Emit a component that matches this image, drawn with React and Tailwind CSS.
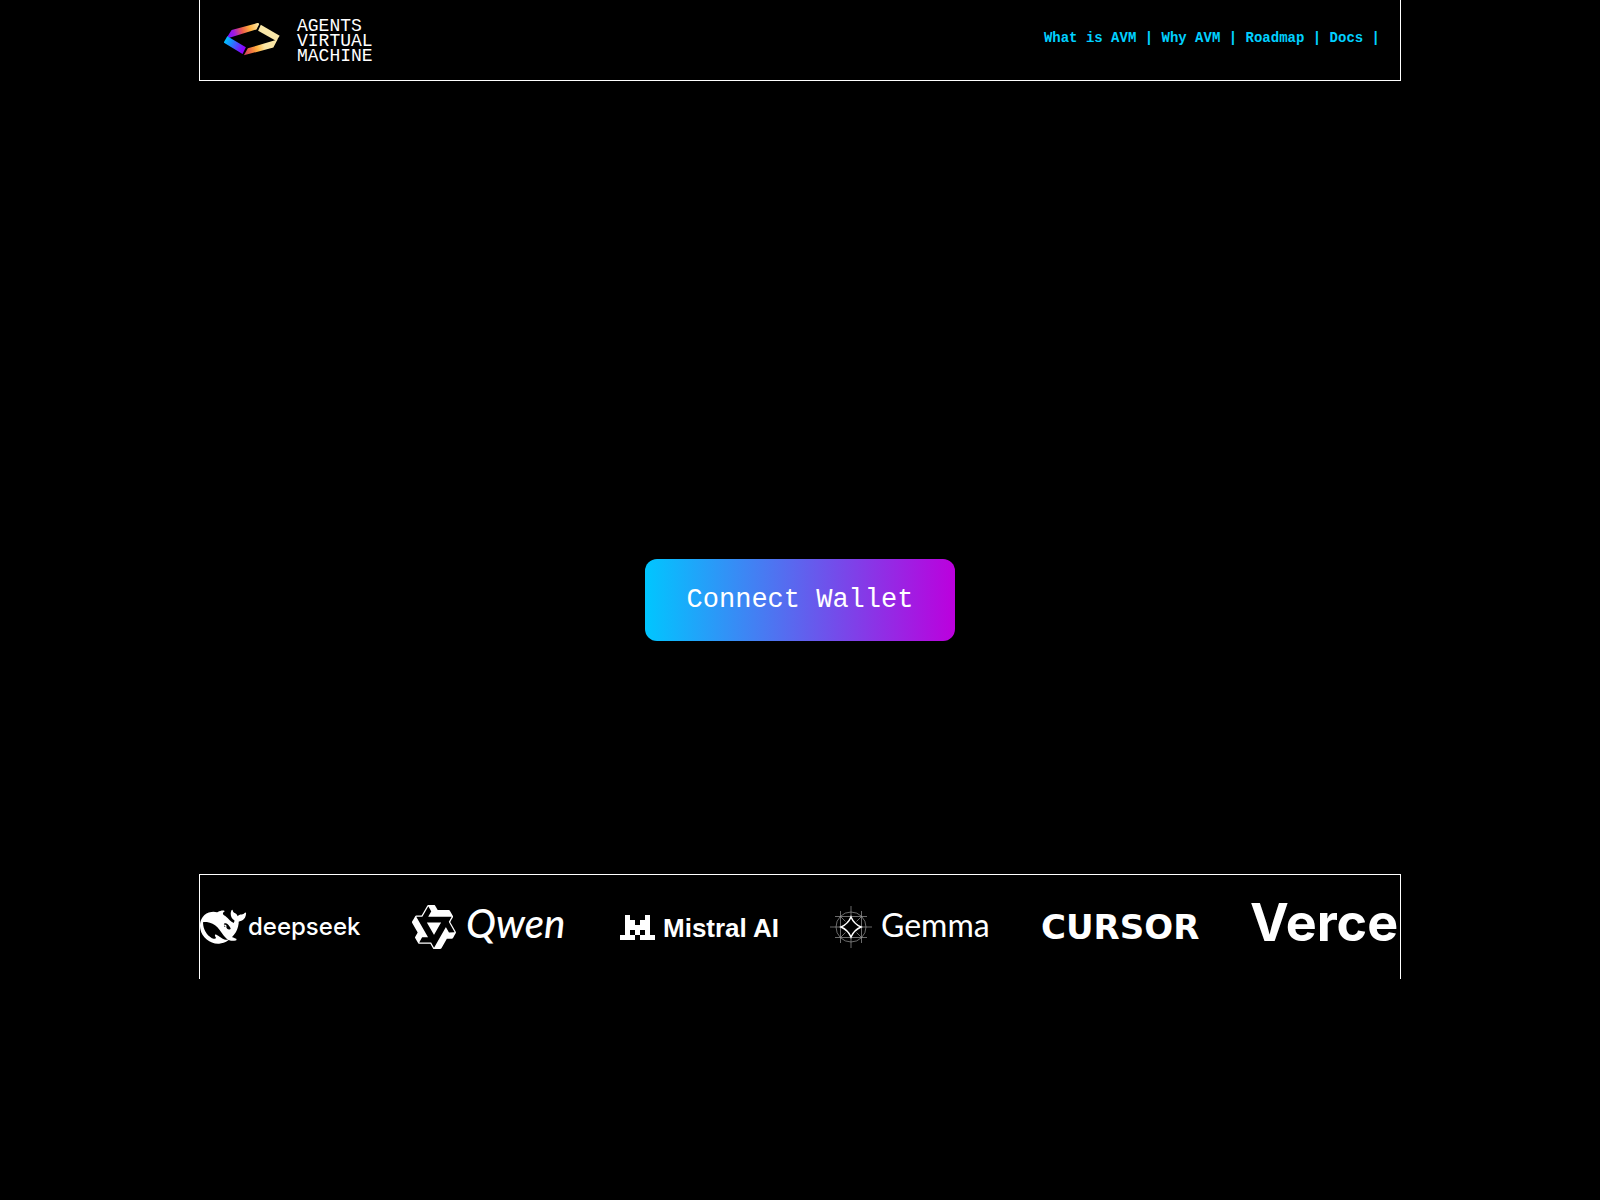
import React from "react";

const navLinks = ["What is AVM", "Why AVM", "Roadmap", "Docs"];

function AvmLogo() {
  return (
    <svg viewBox="102 68 172 108" className="h-9 w-[57px]" aria-hidden="true">
      <defs>
        <linearGradient id="avm-top" gradientUnits="userSpaceOnUse" x1="114" y1="108" x2="208" y2="78">
          <stop offset="0" stopColor="#7a10ff" />
          <stop offset="0.2" stopColor="#a01be0" />
          <stop offset="0.45" stopColor="#e9574f" />
          <stop offset="0.7" stopColor="#ffae3d" />
          <stop offset="1" stopColor="#fbe9a9" />
        </linearGradient>
        <linearGradient id="avm-left" gradientUnits="userSpaceOnUse" x1="104" y1="124" x2="164" y2="154">
          <stop offset="0" stopColor="#00c3ff" />
          <stop offset="0.3" stopColor="#1a8cff" />
          <stop offset="0.65" stopColor="#5a3cff" />
          <stop offset="0.9" stopColor="#8a00ff" />
        </linearGradient>
        <linearGradient id="avm-bottom" gradientUnits="userSpaceOnUse" x1="164" y1="160" x2="258" y2="132">
          <stop offset="0" stopColor="#d0405f" />
          <stop offset="0.22" stopColor="#f0763f" />
          <stop offset="0.42" stopColor="#ffb540" />
          <stop offset="0.65" stopColor="#fbe6a5" />
        </linearGradient>
      </defs>
      <path d="M125 92 202 71Q210 70 207 77L200 90 116 116 112 112Z" fill="url(#avm-top)" />
      <path d="M213 76 270 109 260 125 205 94Z" fill="#fae7a8" />
      <path d="M174 147 256 123 264 120 251 145 162 168Z" fill="url(#avm-bottom)" />
      <path d="M101 130 112 111 168 144 158 164Z" fill="url(#avm-left)" />
    </svg>
  );
}

function Logo({ label, children }) {
  return (
    <svg viewBox="0 0 160 44" className="h-11 w-40 shrink-0 overflow-visible fill-white" role="img" aria-label={label}>
      {children}
    </svg>
  );
}

function DeepSeek() {
  return (
    <Logo label="deepseek">
      <g transform="translate(0 -1) scale(1.92)">
        <path d="M23.748 4.482c-.254-.124-.364.113-.512.234-.051.039-.094.09-.137.136-.372.397-.806.657-1.373.626-.829-.046-1.537.214-2.163.848-.133-.782-.575-1.248-1.247-1.548-.352-.156-.708-.311-.955-.65-.172-.241-.219-.51-.305-.774-.055-.16-.11-.323-.293-.35-.2-.031-.278.136-.356.276-.313.572-.434 1.202-.422 1.84.027 1.436.633 2.58 1.838 3.393.137.093.172.187.129.323-.082.28-.18.552-.266.833-.055.179-.137.217-.329.14a5.526 5.526 0 01-1.736-1.18c-.857-.828-1.631-1.742-2.597-2.458a11.365 11.365 0 00-.689-.471c-.985-.957.13-1.743.388-1.836.27-.098.093-.432-.779-.428-.872.004-1.67.295-2.687.684a3.055 3.055 0 01-.465.137 9.597 9.597 0 00-2.883-.102c-1.885.21-3.39 1.102-4.497 2.623C.082 8.606-.231 10.684.152 12.85c.403 2.284 1.569 4.175 3.36 5.653 1.858 1.533 3.997 2.284 6.438 2.14 1.482-.085 3.133-.284 4.994-1.86.47.234.962.327 1.78.397.63.059 1.236-.03 1.705-.128.735-.156.684-.837.419-.961-2.155-1.004-1.682-.595-2.113-.926 1.096-1.296 2.746-2.642 3.392-7.003.05-.347.007-.565 0-.845-.004-.17.035-.237.23-.256a4.173 4.173 0 001.545-.475c1.396-.763 1.96-2.015 2.093-3.517.02-.23-.004-.467-.247-.588zM11.581 18c-2.089-1.642-3.102-2.183-3.52-2.16-.392.024-.321.471-.235.763.09.288.207.486.371.739.114.167.192.416-.113.603-.673.416-1.842-.14-1.897-.167-1.361-.802-2.5-1.86-3.301-3.307-.774-1.393-1.224-2.887-1.298-4.482-.02-.386.093-.522.477-.592a4.696 4.696 0 011.529-.039c2.132.312 3.946 1.265 5.468 2.774.868.86 1.525 1.887 2.202 2.891.72 1.066 1.494 2.082 2.48 2.914.348.292.625.514.891.677-.802.09-2.14.11-3.054-.614zm1-6.44a.306.306 0 01.415-.287.302.302 0 01.2.288.306.306 0 01-.31.307.303.303 0 01-.304-.308zm3.11 1.596c-.2.081-.399.151-.59.16a1.245 1.245 0 01-.798-.254c-.274-.23-.47-.358-.552-.758a1.73 1.73 0 01.016-.588c.07-.327-.008-.537-.239-.727-.187-.156-.426-.199-.688-.199a.559.559 0 01-.254-.078c-.11-.054-.2-.19-.114-.358.028-.054.16-.186.192-.21.356-.202.767-.136 1.146.016.352.144.618.408 1.001.782.391.451.462.576.685.914.176.265.336.537.445.848.067.195-.019.354-.25.452z" />
      </g>
      <text x="48" y="30" className="font-['Inter',sans-serif] text-[24px] font-medium">deepseek</text>
    </Logo>
  );
}

function Qwen() {
  return (
    <Logo label="Qwen">
      <g transform="translate(0 -2) scale(2)">
        <path d="M12.604 1.34c.393.69.784 1.382 1.174 2.075a.18.18 0 00.157.091h5.552c.174 0 .322.11.446.327l1.454 2.57c.19.337.24.478.024.837-.26.43-.513.864-.76 1.3l-.367.658c-.106.196-.223.28-.04.512l2.652 4.637c.172.301.111.494-.043.77-.437.785-.882 1.564-1.335 2.34-.159.272-.352.375-.68.37-.777-.016-1.552-.01-2.327.016a.099.099 0 00-.081.05 575.097 575.097 0 01-2.705 4.74c-.169.293-.38.363-.725.364-.997.003-2.002.004-3.017.002a.537.537 0 01-.465-.271l-1.335-2.323a.09.09 0 00-.083-.049H4.982c-.285.03-.553-.001-.805-.092l-1.603-2.77a.543.543 0 01-.002-.54l1.207-2.12a.198.198 0 000-.197 550.951 550.951 0 01-1.875-3.272l-.79-1.395c-.16-.31-.173-.496.095-.965.465-.813.927-1.625 1.387-2.436.132-.234.304-.334.584-.335a338.3 338.3 0 012.589-.001.124.124 0 00.107-.063l2.806-4.895a.488.488 0 01.422-.246c.524-.001 1.053 0 1.583-.006L11.704 1c.341-.003.724.032.9.34zm-3.432.403a.06.06 0 00-.052.03L6.254 6.788a.157.157 0 01-.135.078H3.253c-.056 0-.07.025-.041.074l5.81 10.156c.025.042.013.062-.034.063l-2.795.015a.218.218 0 00-.2.116l-1.32 2.31c-.044.078-.021.118.068.118l5.716.008c.046 0 .08.02.104.061l1.403 2.454c.046.081.092.082.139 0l5.006-8.76.783-1.382a.055.055 0 01.096 0l1.424 2.53a.122.122 0 00.107.062l2.763-.02a.04.04 0 00.035-.02.041.041 0 000-.04l-2.9-5.086a.108.108 0 010-.113l.293-.507 1.12-1.977c.024-.041.012-.062-.035-.062H9.2c-.059 0-.073-.026-.043-.077l1.434-2.505a.107.107 0 000-.114L9.225 1.774a.06.06 0 00-.053-.031zm6.29 8.02c.046 0 .058.02.034.06l-.832 1.465-2.613 4.585a.056.056 0 01-.05.029.058.058 0 01-.05-.029L8.498 9.841c-.02-.034-.01-.052.028-.054l.216-.012 6.722-.012z" />
      </g>
      <text x="56" y="33" className="font-['Lato',sans-serif] text-[40px] font-medium italic">Qwen</text>
    </Logo>
  );
}

function Mistral() {
  return (
    <Logo label="Mistral AI">
      <path d="M5 10h5v5h5v5h5v-5h5v-5h5v20h5v5H20v-5h5v-5h-5v5h-5v-5h-5v5h5v5H0v-5h5z" />
      <text x="43" y="32" className="font-['Liberation_Sans',sans-serif] text-[26px] font-bold">Mistral AI</text>
    </Logo>
  );
}

function Gemma() {
  return (
    <Logo label="Gemma">
      <g fill="none" stroke="#9a9a9a" strokeWidth="0.7">
        <circle cx="21" cy="22" r="15" />
        <path d="M0 22h42M21 1v42M10.500 6v32M31.500 6v32M5 11.500h32M5 32.500h32M10.500 11.500l5 5M31.500 11.500l-5 5M10.500 32.500l5-5M31.500 32.500l-5-5" />
      </g>
      <path d="M21 12Q24 19 31 22 24 25 21 32 18 25 11 22 18 19 21 12Z" fill="black" stroke="white" strokeWidth="1.500" />
      <text x="51" y="32" className="font-['Lato',sans-serif] text-[32px]">Gemma</text>
    </Logo>
  );
}

function Cursor() {
  return (
    <Logo label="Cursor">
      <text x="1" y="34" className="font-['DejaVu_Sans',sans-serif] text-[34px] font-bold">CURSOR</text>
    </Logo>
  );
}

function Vercel() {
  return (
    <Logo label="Vercel">
      <text x="0" y="36" className="font-['Inter',sans-serif] text-[52px] font-bold">Vercel</text>
    </Logo>
  );
}

export default function App() {
  return (
    <div className="min-h-screen bg-black font-['Liberation_Mono',monospace] text-white">
      <div className="mx-auto w-full max-w-[1202px]">
        <header className="flex items-center justify-between border border-t-0 border-white py-4 pr-5 pl-6">
          <a href="#home" className="flex items-center gap-4 text-white">
            <AvmLogo />
            <span className="pt-[3px] text-[18px] leading-[15px]">
              AGENTS
              <br />
              VIRTUAL
              <br />
              MACHINE
            </span>
          </a>
          <nav className="pb-1 text-sm leading-5 font-bold whitespace-pre text-[#00d0ff]">
            {navLinks.map((label, i) => (
              <React.Fragment key={label}>
                {i > 0 && " "}
                <a href={"#" + label.toLowerCase().replaceAll(" ", "-")}>{label}</a>
                <span>{" |"}</span>
              </React.Fragment>
            ))}
          </nav>
        </header>

        <main className="flex justify-center pt-[478px] pb-[233px]">
          <button
            type="button"
            className="rounded-xl bg-linear-to-r/srgb from-[#00c6ff] to-[#bc00dd] px-[42px] py-5 text-[27px] leading-[42px] text-white"
          >
            Connect Wallet
          </button>
        </main>

        <section aria-label="Partners" className="overflow-hidden border border-b-0 border-white py-[30px]">
          <div className="flex gap-[50px]">
            <DeepSeek />
            <Qwen />
            <Mistral />
            <Gemma />
            <Cursor />
            <Vercel />
          </div>
        </section>
      </div>
    </div>
  );
}
